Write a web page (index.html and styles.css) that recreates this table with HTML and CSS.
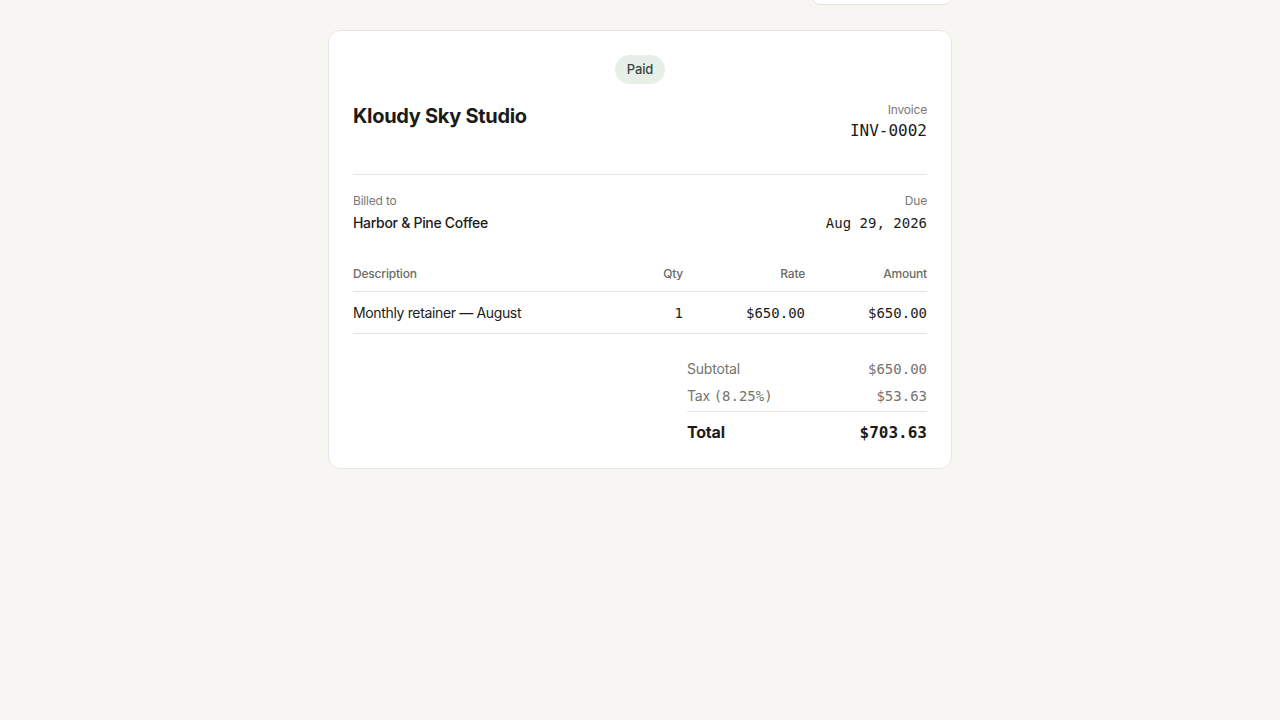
FILE: index.html
```html
<!DOCTYPE html>
<html>
<head>
<meta charset="utf-8">
<link rel="stylesheet" href="styles.css">
</head>
<body>
<div class="page">
  <div class="toolbar"><div class="tool-btn"></div></div>
  <div class="card">
    <div class="status"><span class="badge">Paid</span></div>
    <div class="head">
      <h1 class="studio">Kloudy Sky Studio</h1>
      <div class="meta right inv-meta">
        <div class="label">Invoice</div>
        <div class="inv-no mono">INV-0002</div>
      </div>
    </div>
    <div class="parties">
      <div class="meta">
        <div class="label">Billed to</div>
        <div class="client">Harbor &amp; Pine Coffee</div>
      </div>
      <div class="meta right">
        <div class="label">Due</div>
        <div class="due mono">Aug 29, 2026</div>
      </div>
    </div>
    <div class="table">
      <div class="trow thead">
        <div>Description</div>
        <div class="num">Qty</div>
        <div class="num">Rate</div>
        <div class="num">Amount</div>
      </div>
      <div class="trow tbody">
        <div class="desc">Monthly retainer — August</div>
        <div class="num mono">1</div>
        <div class="num mono">$650.00</div>
        <div class="num mono">$650.00</div>
      </div>
    </div>
    <div class="totals">
      <div class="trow2 sub"><span>Subtotal</span><span class="mono">$650.00</span></div>
      <div class="trow2 sub"><span>Tax <span class="mono">(8.25%)</span></span><span class="mono">$53.63</span></div>
      <div class="trow2 total"><span>Total</span><span class="mono">$703.63</span></div>
    </div>
  </div>
</div>
</body>
</html>
```
FILE: styles.css
```css
* { box-sizing: border-box; }
html, body { margin: 0; padding: 0; }
body {
  background: #f7f6f2;
  font-family: Inter, "Noto Sans", sans-serif;
  color: #1b1b19;
  height: 720px;
  overflow: hidden;
}
.mono { font-family: "DejaVu Sans Mono", "Liberation Mono", monospace; }
.page {
  width: 624px;
  margin: 0 auto;
}
.toolbar {
  display: flex;
  justify-content: flex-end;
  margin-top: -31px;
  margin-bottom: 25px;
}
.tool-btn {
  width: 140px;
  height: 36px;
  background: #fff;
  border: 1px solid #e6e4de;
  border-radius: 8px;
}
.card {
  background: #fff;
  border: 1px solid #e8e6e0;
  border-radius: 12px;
  padding: 24px 24px 23px;
}
.status { display: flex; justify-content: center; }
.badge {
  display: inline-block;
  background: #e7efe8;
  color: #3b463d;
  font-size: 13px;
  font-weight: 500;
  line-height: 29px;
  padding: 0 12px;
  border-radius: 15px;
  letter-spacing: -0.1px;
}
.head {
  display: flex;
  justify-content: space-between;
  align-items: flex-start;
  margin-top: 16px;
  padding-bottom: 32px;
  border-bottom: 1px solid #e8e6e0;
}
.studio {
  margin: 2px 0 0;
  font-size: 20px;
  font-weight: 700;
  letter-spacing: -0.3px;
  line-height: 28px;
}
.inv-meta { margin-top: 2px; }
.right { text-align: right; }
.label {
  font-size: 12px;
  color: #7b7973;
  line-height: 16px;
  letter-spacing: -0.2px;
}
.inv-no {
  font-size: 16px;
  line-height: 22px;
  margin-top: 2px;
}
.parties {
  display: flex;
  justify-content: space-between;
  margin-top: 18px;
}
.client {
  font-size: 14px;
  font-weight: 500;
  margin-top: 4px;
  line-height: 20px;
  letter-spacing: -0.3px;
}
.due {
  font-size: 14px;
  margin-top: 4px;
  line-height: 20px;
}
.table { margin-top: 31px; }
.trow {
  display: grid;
  grid-template-columns: 1fr 120px 122px 122px;
  border-bottom: 1px solid #e8e6e0;
}
.num { text-align: right; }
.thead {
  font-size: 12px;
  font-weight: 500;
  color: #6d6b65;
  line-height: 16px;
  padding: 2px 0 9px;
  letter-spacing: -0.2px;
}
.tbody {
  font-size: 14px;
  line-height: 20px;
  padding: 11px 0 10px;
}
.desc { letter-spacing: -0.35px; }
.totals {
  width: 240px;
  margin: 25px 0 0 auto;
}
.trow2 {
  display: flex;
  justify-content: space-between;
  align-items: baseline;
}
.sub {
  font-size: 14px;
  color: #75736d;
  line-height: 20px;
  margin-bottom: 7px;
  letter-spacing: -0.2px;
}
.sub .mono { letter-spacing: 0; }
.sub:nth-child(2) { margin-bottom: 0; padding-bottom: 5px; border-bottom: 1px solid #e8e6e0; }
.total {
  font-size: 16px;
  font-weight: 700;
  line-height: 24px;
  padding-top: 8px;
  letter-spacing: -0.2px;
}
.total .mono { letter-spacing: 0; }
```
